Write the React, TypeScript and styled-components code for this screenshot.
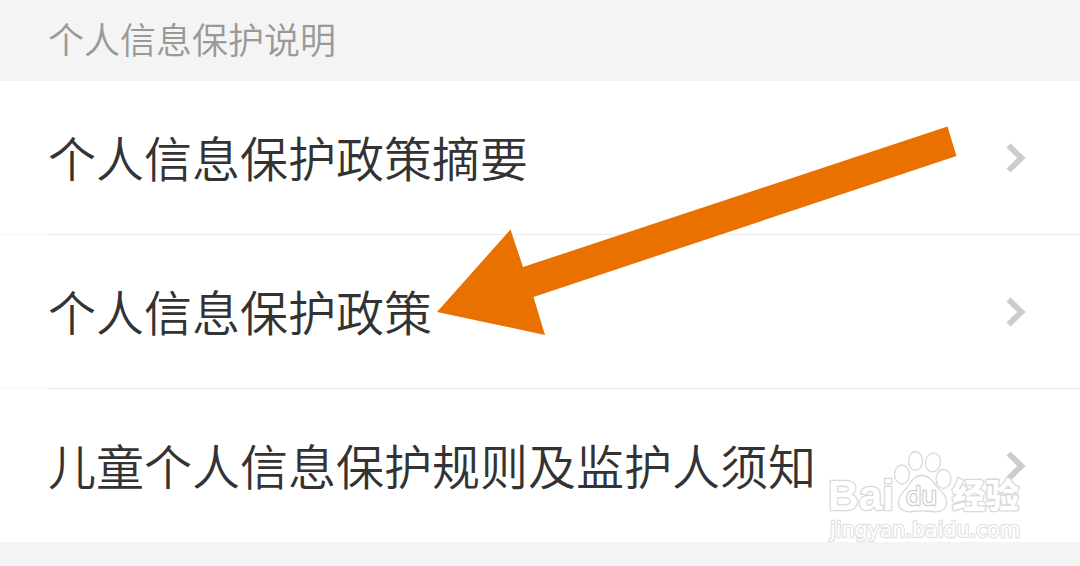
import React from "react";
import styled, { createGlobalStyle } from "styled-components";

const GlobalStyle = createGlobalStyle`
  body {
    margin: 0;
    background-color: #f4f4f4;
    font-family: "Noto Sans CJK SC", sans-serif;
  }
`;

const Page = styled.main`
  position: relative;
  width: 1080px;
  height: 566px;
  overflow: hidden;
  background-color: #f4f4f4;
`;

const SectionTitle = styled.h2`
  display: flex;
  align-items: center;
  box-sizing: border-box;
  height: 81px;
  margin: 0;
  padding: 0 48px 5px;
  color: #999;
  font-size: 36px;
  font-weight: 350;
  line-height: 1;
`;

const List = styled.div`
  display: flex;
  flex-direction: column;
  background-color: #fff;
`;

const Row = styled.div`
  display: flex;
  align-items: center;
  justify-content: space-between;
  box-sizing: border-box;
  height: 154px;
  padding: 0 53px 1px 48px;
  background: linear-gradient(to right, #f6f6f6 48px, #ececec 48px) bottom / 100% 1px no-repeat;

  &:last-child {
    height: 153px;
    padding-bottom: 0;
    background: none;
  }
`;

const RowLabel = styled.span`
  padding-bottom: 3px;
  color: #333;
  font-size: 48px;
  font-weight: 350;
  line-height: 1;
  white-space: nowrap;
`;

const Chevron = styled.svg`
  width: 22px;
  height: 32px;
  fill: none;
  stroke: #ccc;
  stroke-width: 5.8;
`;

const Arrow = styled.svg`
  position: absolute;
  top: 120px;
  left: 430px;
  width: 535px;
  height: 220px;
  fill: #e97100;
`;

const Watermark = styled.svg`
  position: absolute;
  top: 440px;
  left: 820px;
  width: 220px;
  height: 110px;
  fill: #fff;
  stroke: #d8d8d8;
  stroke-width: 2.6;
  stroke-linejoin: round;
  opacity: 0.95;

  text {
    paint-order: stroke;
  }
`;

const BrandText = styled.text`
  font-family: "Liberation Sans", sans-serif;
  font-size: 43px;
  font-weight: 700;
`;

const PawText = styled.text`
  font-family: "Open Sans", sans-serif;
  font-size: 26px;
  font-weight: 500;
  stroke: #ccc;
`;

const ProductText = styled.text`
  font-family: "Noto Sans CJK SC", sans-serif;
  font-size: 34px;
  font-weight: 900;
`;

const UrlText = styled.text`
  font-family: "DejaVu Sans", sans-serif;
  font-size: 22px;
  font-weight: 400;
  stroke: #e2e2e2;
`;

const items = [
  "个人信息保护政策摘要",
  "个人信息保护政策",
  "儿童个人信息保护规则及监护人须知",
];

const App: React.FC = () => {
  return (
    <Page>
      <GlobalStyle />
      <SectionTitle>个人信息保护说明</SectionTitle>
      <List>
        {items.map((item) => (
          <Row key={item}>
            <RowLabel>{item}</RowLabel>
            <Chevron viewBox="0 0 22 32">
              <path d="M3.500 3.500 16.500 16 3.500 28.500" />
            </Chevron>
          </Row>
        ))}
      </List>

      <Arrow viewBox="430 120 535 220">
        <path d="M437 312 510.500 229.500 523 267 947.500 126.500 956.500 156 533.500 297 545 335Z" />
      </Arrow>

      <Watermark viewBox="820 440 220 110">
        <BrandText x="828" y="510" textLength="66" lengthAdjust="spacingAndGlyphs">
          Bai
        </BrandText>
        <g strokeWidth="1.3">
          <ellipse cx="902" cy="474.500" rx="7.500" ry="9.500" />
          <ellipse cx="915.500" cy="461" rx="7" ry="9.500" />
          <ellipse cx="933" cy="462.500" rx="7.500" ry="9.500" transform="rotate(10 933 462.500)" />
          <ellipse cx="943.500" cy="479" rx="7.500" ry="9.500" />
          <path d="M922 475.500C930 475.500 933 482 937 487C943 493 947 496 946.500 503C946 511 939 512.500 932 511.500C925 510.500 919 510.500 912 511.500C904 513 898 509 898.500 501C899 494 905 491 909 485C912 480 915 475.500 922 475.500Z" />
        </g>
        <PawText x="906" y="505" textLength="31" lengthAdjust="spacingAndGlyphs">
          du
        </PawText>
        <ProductText x="952" y="508" textLength="67" lengthAdjust="spacingAndGlyphs">
          经验
        </ProductText>
        <UrlText x="830" y="536.500" textLength="190" lengthAdjust="spacingAndGlyphs">
          jingyan.baidu.com
        </UrlText>
      </Watermark>
    </Page>
  );
};

export default App;
